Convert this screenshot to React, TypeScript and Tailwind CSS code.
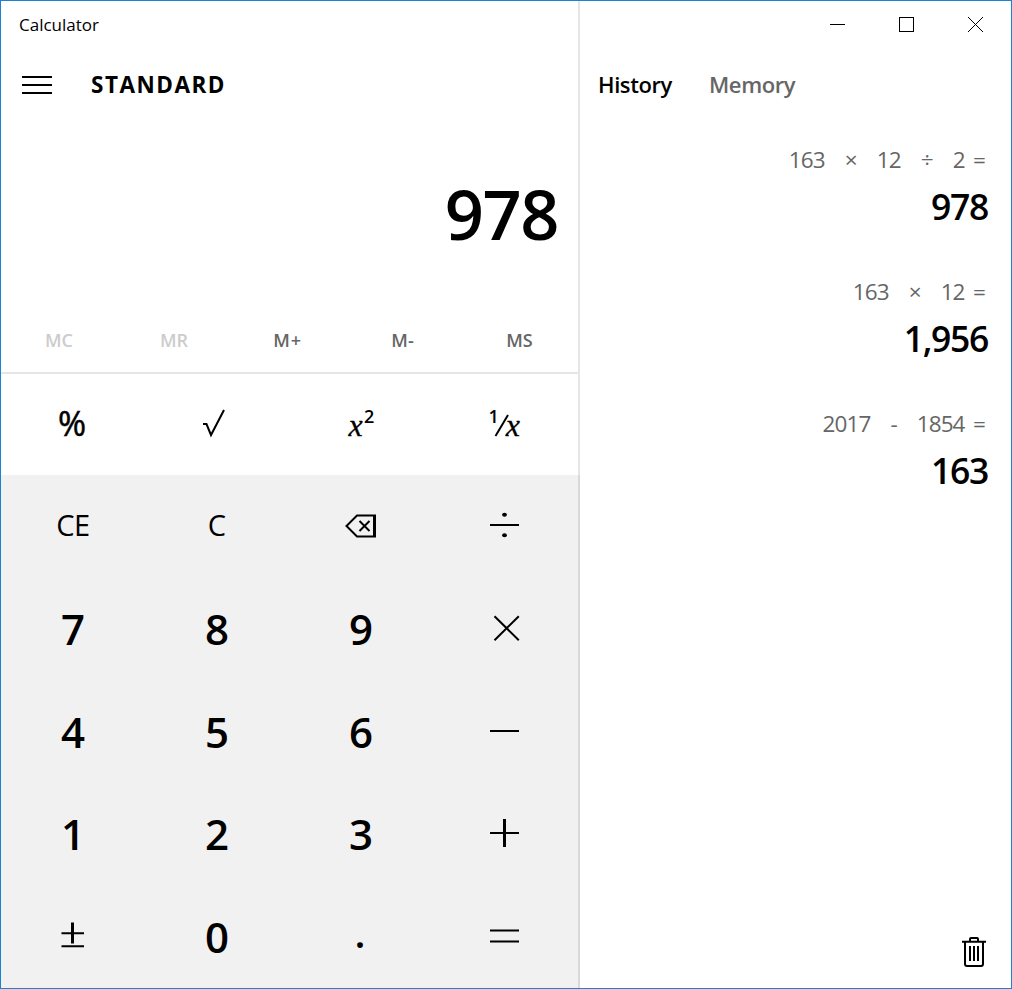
import type { ReactNode } from 'react';

const KEY = 'flex items-center justify-center leading-none';

function Digit({ children }: { children: ReactNode }) {
  return <button className={`${KEY} pb-[1px] text-[42px] font-semibold`}>{children}</button>;
}

function Glyph({ label, width = 40, height = 41, children }: { label: string; width?: number; height?: number; children: ReactNode }) {
  return (
    <button aria-label={label} className={KEY}>
      <svg width={width} height={height} viewBox={`0 0 ${width} ${height}`} fill="none" stroke="#000" strokeWidth="2">
        {children}
      </svg>
    </button>
  );
}

function HistoryItem({ parts, result }: { parts: string[]; result: string }) {
  return (
    <div className="flex h-[132px] flex-col items-end">
      <div className="flex h-[30px] items-center gap-[20px] pr-[4px] text-[22.5px] leading-none tracking-[-0.9px] [word-spacing:3.5px] text-[#666]">
        {parts.map((p, i) => (
          <span key={i} className="whitespace-pre">{p}</span>
        ))}
      </div>
      <div className="mt-[8px] pr-[1px] text-[35.5px] font-semibold leading-[46px] tracking-[-1.3px]">{result}</div>
    </div>
  );
}

export default function App() {
  return (
    <div className="flex h-[989px] w-[1012px] overflow-hidden border border-[#1e82d2] bg-white font-['Open_Sans','Noto_Sans',sans-serif] text-black">
      <main className="flex w-[579px] shrink-0 flex-col">
        <section className="flex h-[371px] flex-col border-r-2 border-[#e6e6e6]">
          <div className="h-[47px] pl-[18px] pt-[11px] text-[17px] leading-[26px]">Calculator</div>
          <div className="flex h-[74px] items-center pl-[21px]">
            <svg width="30" height="20" viewBox="0 0 30 20" fill="none" stroke="#000" strokeWidth="2">
              <path d="M0 2H30M0 10H30M0 18H30" />
            </svg>
            <h1 className="pl-[39px] text-[22.5px] font-bold leading-none tracking-[1.5px]">STANDARD</h1>
          </div>
          <div className="flex h-[186px] items-start justify-end pr-[20px] pt-[57px] text-[68.5px] font-semibold leading-[70px] tracking-[-1.4px]">978</div>
          <div className="grid h-[64px] grid-cols-[116px_114px_113px_117px_1fr] items-center text-center text-[18px] font-semibold leading-none text-[#666]">
            <span className="text-[#ccc]">MC</span>
            <span className="text-[#ccc]">MR</span>
            <span className="tracking-[0.8px]">M+</span>
            <span>M-</span>
            <span>MS</span>
          </div>
        </section>
        <div className="h-[2px] bg-[#e6e6e6]" />
        <section className="grid h-[101px] grid-cols-[144px_144px_144px_1fr] border-r-2 border-[#e6e6e6]">
          <button className={`${KEY} pb-[4px] pr-[2px] text-[34px] [-webkit-text-stroke:0.5px_black]`}>%</button>
          <Glyph label="Square root">
            <path d="M6 20H9.5L14 31L27 6" />
          </Glyph>
          <button className={KEY}>
            <svg width="40" height="41" viewBox="0 0 40 41">
              <text x="7.5" y="32.2" stroke="#000" strokeWidth="0.3" className="font-['Liberation_Serif'] text-[32px] italic">x</text>
              <text x="23" y="19.3" className="text-[18px] font-semibold">2</text>
            </svg>
          </button>
          <button className={KEY}>
            <svg width="41" height="41" viewBox="0 0 41 41">
              <text x="3.5" y="19.3" className="text-[18px] font-semibold">1</text>
              <path d="M10.5 32L23 11" fill="none" stroke="#000" strokeWidth="2" />
              <text x="20.7" y="32.2" stroke="#000" strokeWidth="0.3" className="font-['Liberation_Serif'] text-[32px] italic">x</text>
            </svg>
          </button>
        </section>
        <section className="grid grow grid-cols-[144px_144px_144px_1fr] grid-rows-[103px_103px_102px_103px_102px] border-r-2 border-[#d9d9d9] bg-[#f1f1f1]">
          <button className={`${KEY} pb-[4px] text-[29px] tracking-[-0.5px]`}>CE</button>
          <button className={`${KEY} pb-[4px] text-[29px]`}>C</button>
          <Glyph label="Backspace">
            <path d="M5.5 20L16 9.5H34V30.5H16Z" />
            <path d="M33.5 9V31" strokeWidth="3" />
            <path d="M18.5 15L28.5 25M28.5 15L18.5 25" />
          </Glyph>
          <Glyph label="Divide" width={41}>
            <path d="M5 19H34" />
            <g fill="#000" stroke="none">
              <ellipse cx="19.5" cy="8.7" rx="2.4" ry="2" />
              <ellipse cx="19.5" cy="29.3" rx="2.4" ry="2" />
            </g>
          </Glyph>

          <Digit>7</Digit>
          <Digit>8</Digit>
          <Digit>9</Digit>
          <Glyph label="Multiply" width={41}>
            <path d="M9.5 7.2L33.8 31.2M33.8 7.2L9.5 31.2" />
          </Glyph>

          <Digit>4</Digit>
          <Digit>5</Digit>
          <Digit>6</Digit>
          <Glyph label="Minus" width={41} height={40}>
            <path d="M5 19H34" />
          </Glyph>

          <Digit>1</Digit>
          <Digit>2</Digit>
          <Digit>3</Digit>
          <Glyph label="Plus" width={41}>
            <path d="M5 19H34" />
            <path d="M19.5 5V33" strokeWidth="3" />
          </Glyph>

          <Glyph label="Plus minus" height={40}>
            <path d="M8.5 16.2H31M8.5 29.2H31" />
            <path d="M19.5 5.5V26.5" strokeWidth="3" />
          </Glyph>
          <Digit>0</Digit>
          <button className={`${KEY} pb-[9px] pr-[2px] text-[40px] font-semibold`}>.</button>
          <Glyph label="Equals" width={41} height={40}>
            <path d="M5 13.4H34M5 24.6H34" />
          </Glyph>
        </section>
      </main>

      <aside className="flex grow flex-col">
        <div className="flex h-[47px] items-center justify-end pr-[26px]">
          <svg width="155" height="17" viewBox="0 0 155 17" fill="none" stroke="#000" shapeRendering="crispEdges">
            <path d="M0 8.5H15" />
            <rect x="69.5" y="1.5" width="14" height="14" />
            <path d="M138 1L153 16M153 1L138 16" shapeRendering="auto" />
          </svg>
        </div>
        <nav className="flex h-[74px] items-center gap-[37px] pb-[2px] pl-[18px] text-[22px] font-semibold leading-none tracking-[-0.4px]">
          <span>History</span>
          <span className="text-[#666]">Memory</span>
        </nav>
        <div className="grow pr-[22px] pt-[23px]">
          <HistoryItem parts={['163', '×', '12', '÷', '2 =']} result="978" />
          <HistoryItem parts={['163', '×', '12 =']} result="1,956" />
          <HistoryItem parts={['2017', '-', '1854 =']} result="163" />
        </div>
        <div className="flex justify-end pb-[20px] pr-[24px]">
          <svg width="26" height="32" viewBox="0 0 26 32" fill="none" stroke="#000" strokeWidth="2">
            <path d="M1 5.7H25M9 5V3Q9 2 10 2H16Q17 2 17 3V5M4 6V28Q4 30 6 30H20Q22 30 22 28V6M9 10V25M13 10V25M17 10V25" />
          </svg>
        </div>
      </aside>
    </div>
  );
}
